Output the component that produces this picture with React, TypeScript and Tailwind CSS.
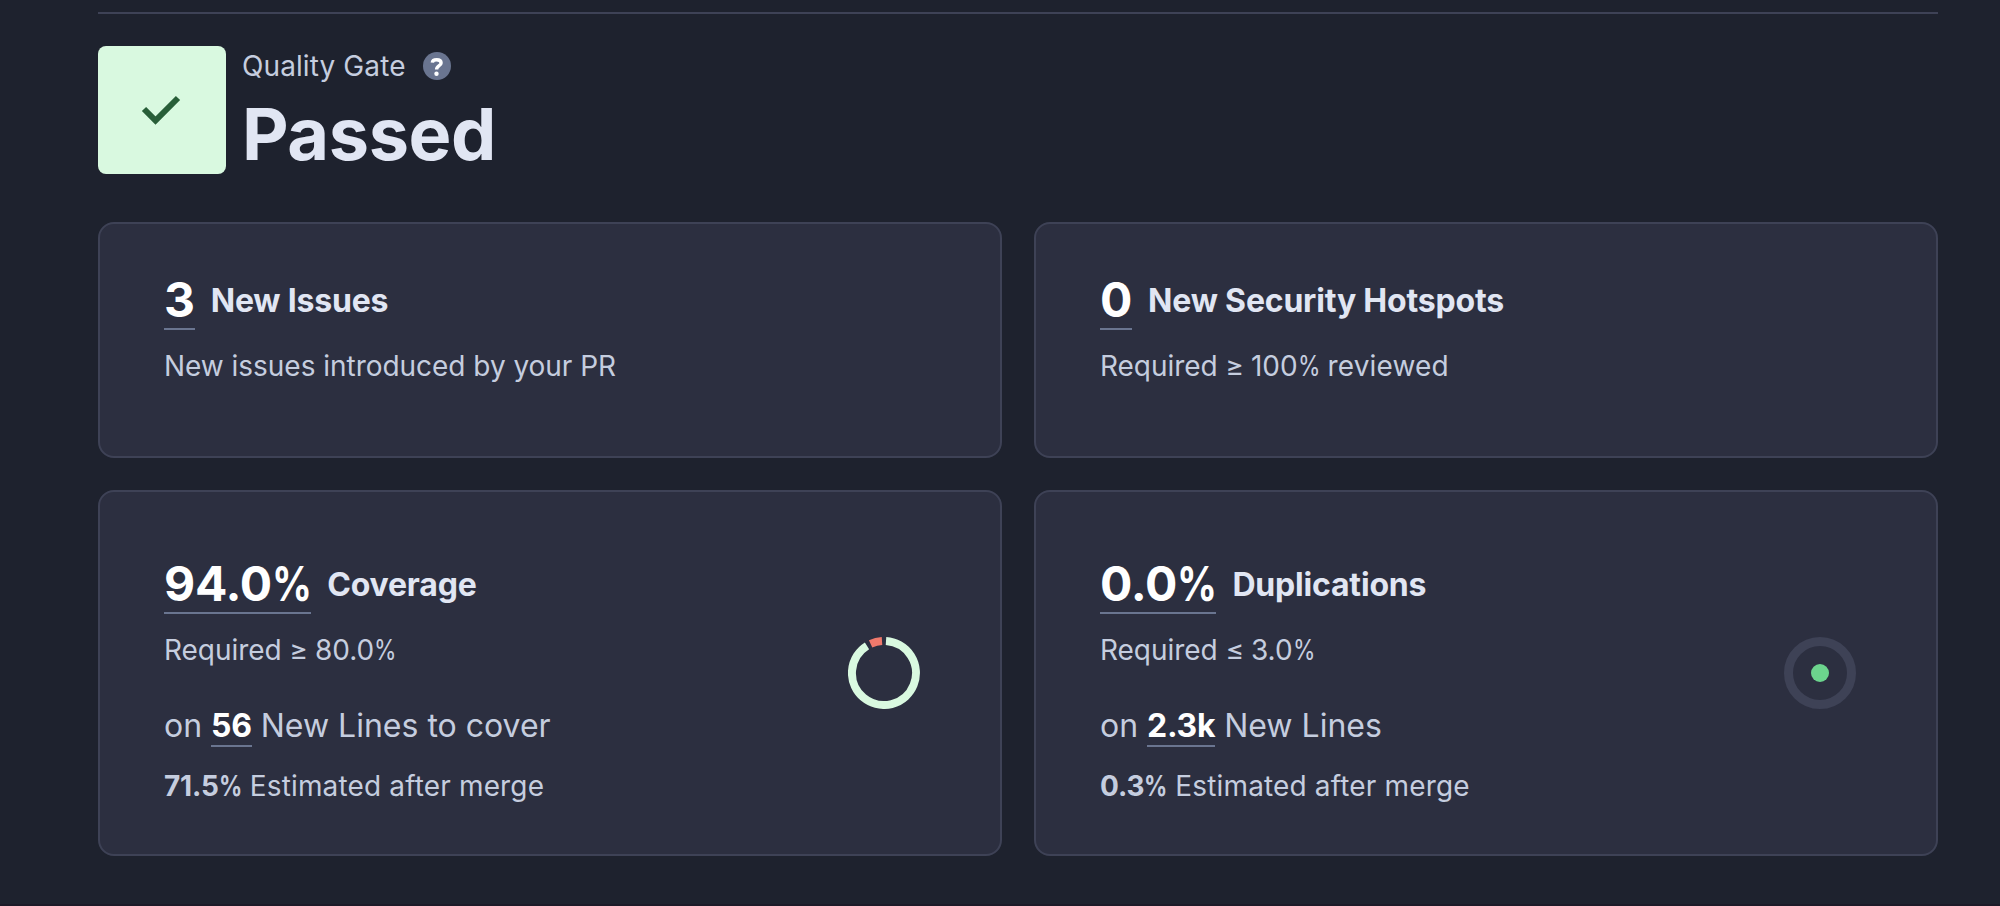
import React from "react";

type Metric = {
  value: string;
  percent?: boolean;
  label: string;
  requirement: React.ReactNode;
  lines?: { count: string; text: string };
  estimate?: string;
  chart?: React.ReactNode;
};

/* Condensed percent sign */
function Percent() {
  return <span className="-mr-[0.19em] inline-block origin-left scale-x-[0.82]">%</span>;
}

function CoverageRing() {
  return (
    <svg width="72" height="72" viewBox="0 0 72 72" fill="none" strokeWidth="8">
      <path d="M38 4.06 A32 32 0 1 1 19 8.85" stroke="#d9f9e0" />
      <path d="M22.6 6.95 A32 32 0 0 1 34 4.06" stroke="#f0796c" />
    </svg>
  );
}

function DuplicationDot() {
  return (
    <svg width="72" height="72" viewBox="0 0 72 72" fill="none">
      <circle cx="36" cy="36" r="31.5" stroke="#3e4256" strokeWidth="9" />
      <circle cx="36" cy="36" r="9" fill="#6cd48d" />
    </svg>
  );
}

function MetricCard({ metric }: { metric: Metric }) {
  const { value, percent, label, requirement, lines, estimate, chart } = metric;
  return (
    <section
      className={`flex items-center justify-between rounded-2xl border-2 border-[#3e4256] bg-[#2c2f40] pr-20 pl-16 ${
        lines ? "h-[366px]" : "h-[236px]"
      }`}
    >
      <div className={`flex flex-col self-stretch ${lines ? "pt-[62px]" : "pt-[46px]"}`}>
        <div className="flex items-center gap-4">
          <span className="h-[60px] border-b-2 border-[#6a7590] text-[48px] leading-[59px] font-bold tracking-[-0.006em] text-white">
            {value}
            {percent && <Percent />}
          </span>
          <span className="pt-px text-[32px] leading-10 font-bold tracking-[-0.006em] text-[#e1e6f3]">
            {label}
          </span>
        </div>
        <p className="mt-4 text-[28px] leading-10 tracking-[-0.03px]">{requirement}</p>
        {lines && (
          <p className="mt-8 text-[32px] leading-[47px]">
            on{" "}
            <span className="inline-block h-[45px] border-b-2 border-[#6a7590] align-top font-bold tracking-[-0.01em] text-white">
              {lines.count}
            </span>{" "}
            {lines.text}
          </p>
        )}
        {estimate && (
          <p className="mt-[17px] text-[28px] leading-10 tracking-[0.15px]">
            <span className="font-bold tracking-[-0.006em]">
              {estimate}
              <Percent />
            </span>{" "}
            Estimated after merge
          </p>
        )}
      </div>
      {chart}
    </section>
  );
}

const metrics: Metric[] = [
  { value: "3", label: "New Issues", requirement: "New issues introduced by your PR" },
  {
    value: "0",
    label: "New Security Hotspots",
    requirement: (
      <>
        Required <span className="-mr-px">≥</span> 100
        <Percent /> <span className="tracking-[0.15px]">reviewed</span>
      </>
    ),
  },
  {
    value: "94.0",
    percent: true,
    label: "Coverage",
    requirement: (
      <>
        Required <span className="-mr-px">≥</span> 80.0
        <Percent />
      </>
    ),
    lines: { count: "56", text: "New Lines to cover" },
    estimate: "71.5",
    chart: <CoverageRing />,
  },
  {
    value: "0.0",
    percent: true,
    label: "Duplications",
    requirement: (
      <>
        Required <span className="-mr-px">≤</span> 3.0
        <Percent />
      </>
    ),
    lines: { count: "2.3k", text: "New Lines" },
    estimate: "0.3",
    chart: <DuplicationDot />,
  },
];

export default function App() {
  return (
    <main className="flex h-[906px] w-[2000px] flex-col overflow-hidden border-b-2 border-[#1c1a28] bg-[#1e222e] pt-3 pr-[62px] pl-[98px] font-['Inter',sans-serif] text-[#c5cddf] [font-feature-settings:'calt'_0]">
      <hr className="border-t-2 border-[#3e4256]" />
      <header className="mt-8 flex h-32 gap-4">
        <div className="flex size-32 items-center justify-center rounded-lg bg-[#d9f9e0]">
          <svg width="64" height="64" viewBox="0 0 64 64" fill="none">
            <path d="M14 31 L25.5 42.5 L48 20" stroke="#285e38" strokeWidth="6" />
          </svg>
        </div>
        <div className="flex flex-col">
          <div className="flex h-10 items-center gap-[17px]">
            <span className="text-[28px] leading-10 tracking-[0.1px]">Quality Gate</span>
            <svg width="28" height="28" viewBox="0 0 28 28" fill="none">
              <circle cx="14" cy="14" r="14" fill="#6a7590" />
              <path
                d="M9.3 10.6 C9.5 8.5 11.3 7.7 13.7 7.7 C16.4 7.7 18.1 8.8 18.1 10.9 C18.1 13.9 13.6 13.4 13.6 17.6"
                stroke="#fff"
                strokeWidth="3.4"
              />
              <circle cx="13.5" cy="21.8" r="2.2" fill="#fff" />
            </svg>
          </div>
          <span className="pt-1 text-[72px] leading-[88px] font-bold tracking-[-0.4px] text-[#e1e6f3]">
            Passed
          </span>
        </div>
      </header>
      <div className="mt-12 grid grid-cols-2 gap-8">
        {metrics.map((metric) => (
          <MetricCard key={metric.label} metric={metric} />
        ))}
      </div>
    </main>
  );
}
